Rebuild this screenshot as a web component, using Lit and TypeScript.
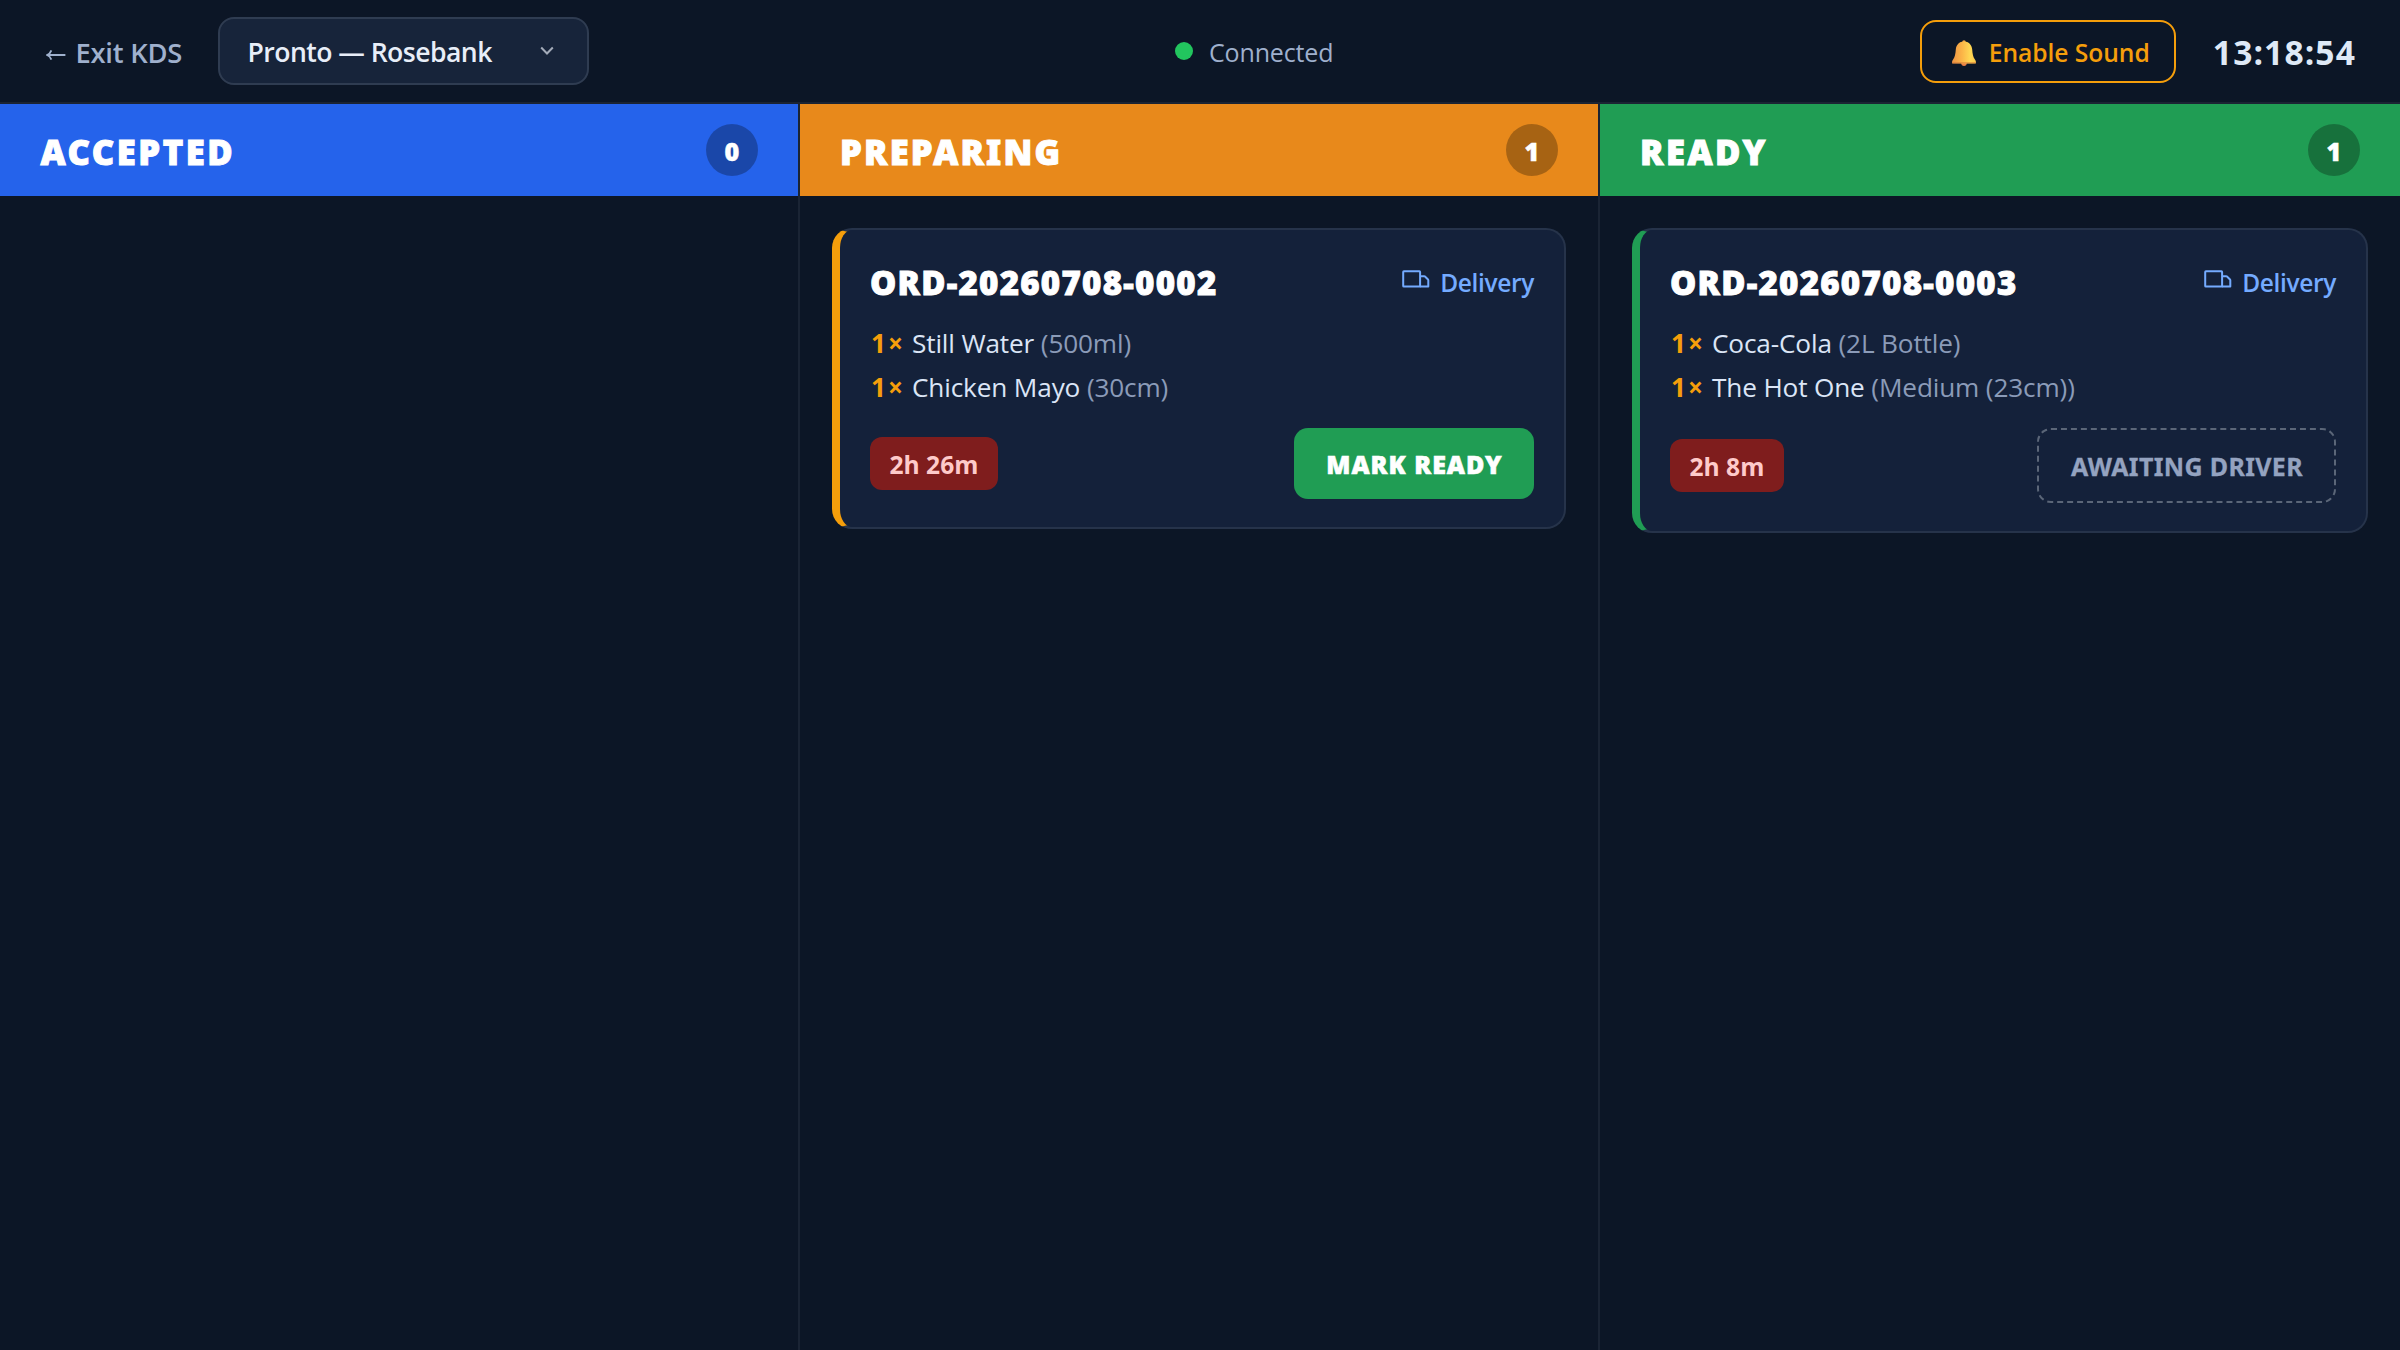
import { LitElement, html, css, svg } from "lit";
import { customElement, property } from "lit/decorators.js";
import { classMap } from "lit/directives/class-map.js";

interface Item {
  qty: number;
  name: string;
  option: string;
}

interface Order {
  number: string;
  items: Item[];
  elapsed: string;
  action: string;
}

interface Column {
  key: "accepted" | "preparing" | "ready";
  title: string;
  orders: Order[];
}

const COLUMNS: Column[] = [
  { key: "accepted", title: "ACCEPTED", orders: [] },
  {
    key: "preparing",
    title: "PREPARING",
    orders: [
      {
        number: "ORD-20260708-0002",
        items: [
          { qty: 1, name: "Still Water", option: "(500ml)" },
          { qty: 1, name: "Chicken Mayo", option: "(30cm)" },
        ],
        elapsed: "2h 26m",
        action: "MARK READY",
      },
    ],
  },
  {
    key: "ready",
    title: "READY",
    orders: [
      {
        number: "ORD-20260708-0003",
        items: [
          { qty: 1, name: "Coca-Cola", option: "(2L Bottle)" },
          { qty: 1, name: "The Hot One", option: "(Medium (23cm))" },
        ],
        elapsed: "2h 8m",
        action: "AWAITING DRIVER",
      },
    ],
  },
];

const arrowIcon = html`<svg class="arrow" width="20" height="12" viewBox="0 0 20 12" fill="none" stroke="currentColor" stroke-width="1.8">
  ${svg`<path d="M1 6H19.4M5.4 1.4C4.6 3.6 3.2 5.2 1 6C3.2 6.8 4.6 8.4 5.4 10.6"/>`}
</svg>`;

const chevronIcon = html`<svg class="chevron" width="14" height="10" viewBox="0 0 14 10" fill="none" stroke="currentColor" stroke-width="2">
  ${svg`<path d="M1.2 1.5L7 7.5L12.8 1.5"/>`}
</svg>`;

const bellIcon = html`<svg class="bell" width="24" height="26" viewBox="0 0 24 26">
  ${svg`<defs>
      <linearGradient id="bell" x1="0" y1="0" x2="1" y2="0">
        <stop offset="0" stop-color="#ec9344"/>
        <stop offset=".4" stop-color="#fbb347"/>
        <stop offset=".75" stop-color="#ffd754"/>
        <stop offset="1" stop-color="#fdc84a"/>
      </linearGradient>
    </defs>
    <circle cx="12" cy="23.2" r="2.7" fill="#ea7f45"/>
    <circle cx="12" cy="2" r="1.8" fill="#f3a545"/>
    <path fill="url(#bell)" d="M12 1.6C16.8 1.6 19.8 5 20.2 9.4C20.5 13.6 21.1 16.8 22.6 19C23.6 20.4 24 21.4 24 22.6C24 23.3 23.6 23.6 23 23.6H1C.4 23.6 0 23.3 0 22.6C0 21.4 .4 20.4 1.4 19C2.9 16.8 3.5 13.6 3.8 9.4C4.2 5 7.2 1.6 12 1.6Z"/>
    <path fill="#d9783a" opacity=".55" d="M.1 21.9H24V22.8C24 23.4 23.6 23.6 23 23.6H1C.4 23.6 0 23.4 0 22.8Z"/>`}
</svg>`;

const truckIcon = html`<svg class="truck" width="28" height="18" viewBox="0 0 28 18" fill="none" stroke="currentColor" stroke-width="2" stroke-linejoin="round">
  ${svg`<path d="M1.9 1.2H17.4Q18.1 1.2 18.1 1.9V16.6H1.9Q1.2 16.6 1.2 15.9V1.9Q1.2 1.2 1.9 1.2Z"/>
    <path d="M18.1 6.2H22.2Q22.7 6.2 23 6.5L26 9.5Q26.3 9.8 26.3 10.3V16.6H18.1"/>`}
</svg>`;

@customElement("order-card")
export class OrderCard extends LitElement {
  @property({ attribute: false }) order!: Order;
  @property() stage = "preparing";

  static styles = css`
    :host { display: block; }
    .card {
      box-sizing: border-box;
      border: 2px solid #26334a;
      border-left: 8px solid #f59e0b;
      border-radius: 20px;
      background: #14213a;
      padding: 28px 30px;
    }
    .card.ready { border-left-color: #209d54; }
    .top { display: flex; align-items: center; justify-content: space-between; height: 48px; }
    .number { font-family: "Noto Sans", "Open Sans", sans-serif; font-size: 33px; font-weight: 900; letter-spacing: 1.27px; color: #fff; -webkit-text-stroke: 0.9px #fff; }
    .type { display: flex; align-items: center; color: #74abff; font-size: 24.5px; font-weight: 550; letter-spacing: -0.35px; }
    .truck { display: block; margin: 0 10px 7px 0; }
    .items { margin: 14px 0 20px; padding: 0; list-style: none; }
    .items li { height: 44px; line-height: 46px; font-size: 26.2px; letter-spacing: -0.15px; color: #dbe5f6; white-space: nowrap; }
    .qty { display: inline-block; width: 42px; box-sizing: border-box; padding-left: 1px; font-weight: 700; letter-spacing: 2px; color: #f59e0b; }
    .option { color: #8b9bb8; }
    .foot { display: flex; align-items: center; justify-content: space-between; }
    .elapsed {
      height: 53px; box-sizing: border-box; padding: 2px 19.5px 0; border-radius: 12px;
      display: flex; align-items: center;
      background: #7f1d1d; color: #fecaca; font-size: 24.6px; font-weight: 700;
    }
    .action {
      box-sizing: border-box; height: 71px; width: 240px; padding: 0 0 0 1px; border: 0; border-radius: 14px;
      display: flex; align-items: center; justify-content: center;
      background: #209d54; color: #fff; font: 900 25px "Noto Sans", "Open Sans", sans-serif; letter-spacing: 1px;
      -webkit-text-stroke: 0.6px currentColor;
    }
    .ready .action {
      height: 75px; width: 299px; border: 2px dashed #5b6678; background: transparent;
      color: #94a3c0; font-weight: 700; letter-spacing: 0.35px; -webkit-text-stroke: 0.3px currentColor;
    }
  `;

  render() {
    const o = this.order;
    return html`<article class=${classMap({ card: true, ready: this.stage === "ready" })}>
      <div class="top">
        <span class="number">${o.number}</span>
        <span class="type">${truckIcon}Delivery</span>
      </div>
      <ul class="items">
        ${o.items.map((i) => html`<li><span class="qty">${i.qty}×</span>${i.name} <span class="option">${i.option}</span></li>`)}
      </ul>
      <div class="foot">
        <span class="elapsed">${o.elapsed}</span>
        <button class="action">${o.action}</button>
      </div>
    </article>`;
  }
}

@customElement("app-root")
export class AppRoot extends LitElement {
  static styles = css`
    :host { display: block; font-family: "Open Sans", "Noto Sans", sans-serif; }
    .screen { display: flex; flex-direction: column; height: 1350px; background: #0c1626; color: #fff; overflow: hidden; }
    .topbar {
      box-sizing: border-box; flex: none; height: 104px; padding: 0 44px 0 45px;
      border-bottom: 2px solid #1b2433;
      display: flex; align-items: center; justify-content: space-between;
    }
    .group { display: flex; align-items: center; }
    .exit { box-sizing: border-box; width: 173px; display: flex; align-items: center; padding-top: 2px; color: #9fb0cd; font-size: 27.4px; font-weight: 550; letter-spacing: -0.25px; white-space: nowrap; }
    .arrow { margin: 6px 10px 0 0.5px; }
    .select {
      box-sizing: border-box; width: 371px; height: 68px; padding: 1px 33px 0 27.5px;
      border: 2px solid #2f3c51; border-radius: 16px; background: #17243a;
      display: flex; align-items: center; justify-content: space-between;
      color: #e8eef8; font-size: 26.6px; font-weight: 600; letter-spacing: -0.55px; white-space: nowrap;
    }
    .chevron { color: #a3abb9; margin-bottom: 1px; }
    .status { display: flex; align-items: center; gap: 15.5px; color: #9fb0cd; font-size: 25px; letter-spacing: -0.15px; }
    .status-text { padding-top: 2px; }
    .dot { width: 18px; height: 18px; border-radius: 50%; background: #22c55e; }
    .sound {
      box-sizing: border-box; width: 256px; height: 63px; padding: 0 0 0 30px; margin-right: 37px;
      border: 2px solid #f59e0b; border-radius: 16px;
      display: flex; align-items: center; gap: 13px;
      color: #f59e0b; font-size: 24.6px; font-weight: 600; letter-spacing: -0.05px; white-space: nowrap;
    }
    .sound-text { padding-top: 2px; }
    .bell { margin-top: 3px; }
    .clock { padding-top: 2px; font-size: 33.6px; font-weight: 700; letter-spacing: 1.1px; color: #dfe9f6; }
    .board { flex: 1; display: grid; grid-template-columns: repeat(3, 800px); }
    .column { box-sizing: border-box; border-right: 2px solid #1a2434; }
    .column:last-child { border-right: 0; }
    .head {
      box-sizing: border-box; height: 92px; padding: 0 40px;
      display: flex; align-items: center; justify-content: space-between;
    }
    .accepted .head { background: #2563eb; }
    .preparing .head { background: #e8891b; }
    .ready .head { background: #209d54; }
    .title { padding-top: 3px; font-family: "Noto Sans", "Open Sans", sans-serif; font-size: 34.6px; font-weight: 900; letter-spacing: 2.2px; -webkit-text-stroke: 1px #fff; }
    .accepted .title { padding-left: 0.5px; letter-spacing: 2.55px; }
    .ready .title { letter-spacing: 2.5px; }
    .count {
      box-sizing: border-box; width: 52px; height: 52px; padding-top: 2px; border-radius: 50%;
      display: flex; align-items: center; justify-content: center;
      background: rgba(0, 0, 0, 0.28); font-family: "Noto Sans", "Open Sans", sans-serif; font-size: 25.2px; font-weight: 900;
      -webkit-text-stroke: 0.5px #fff;
    }
    .orders { padding: 32px; display: flex; flex-direction: column; gap: 24px; }
  `;

  render() {
    return html`<div class="screen">
      <header class="topbar">
        <div class="group">
          <span class="exit">${arrowIcon}Exit KDS</span>
          <div class="select">Pronto — Rosebank ${chevronIcon}</div>
        </div>
        <div class="status"><span class="dot"></span><span class="status-text">Connected</span></div>
        <div class="group">
          <div class="sound">${bellIcon}<span class="sound-text">Enable Sound</span></div>
          <span class="clock">13:18:54</span>
        </div>
      </header>
      <main class="board">
        ${COLUMNS.map(
          (c) => html`<section class="column ${c.key}">
            <div class="head"><span class="title">${c.title}</span><span class="count">${c.orders.length}</span></div>
            <div class="orders">
              ${c.orders.map((o) => html`<order-card .order=${o} stage=${c.key}></order-card>`)}
            </div>
          </section>`
        )}
      </main>
    </div>`;
  }
}
